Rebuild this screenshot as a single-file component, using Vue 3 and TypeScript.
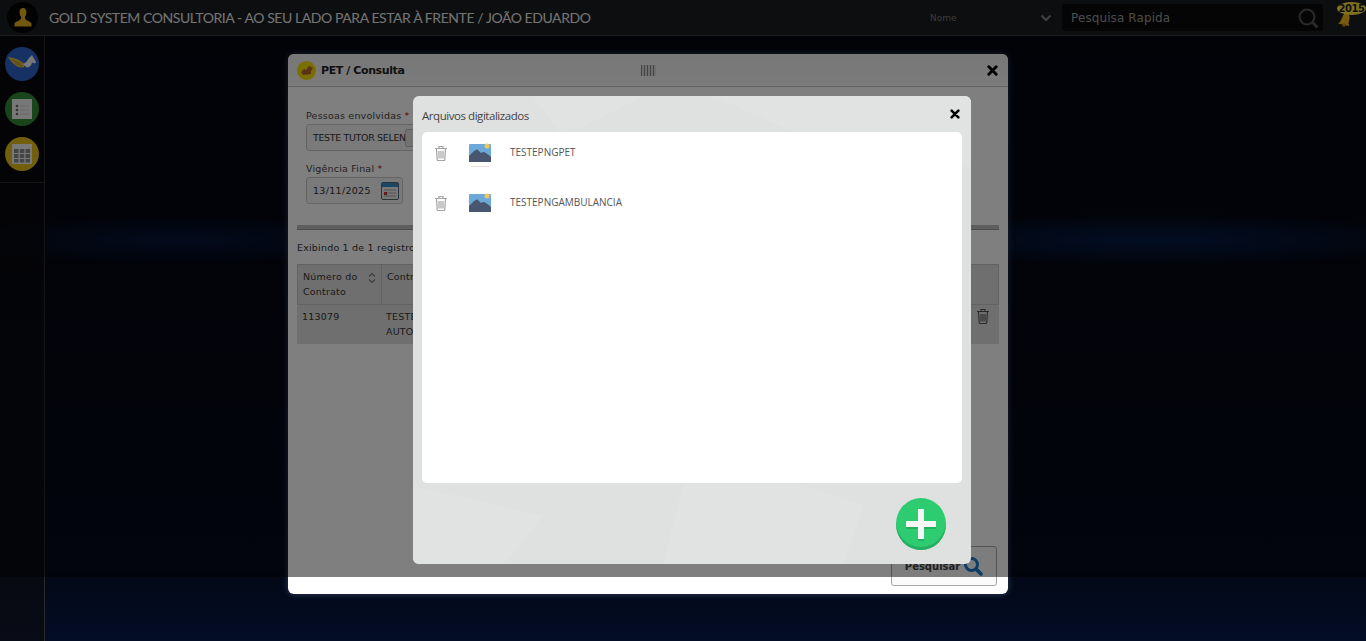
<script setup lang="ts">
type Arquivo = {
  id: number
  nome: string
}

const arquivos: Arquivo[] = [
  { id: 1, nome: 'TESTEPNGPET' },
  { id: 2, nome: 'TESTEPNGAMBULANCIA' },
]
</script>

<template>
  <div class="page">
    <header class="topbar">
      <div class="avatar">
        <svg width="18" height="19" viewBox="0 0 18 19">
          <path d="M9 0C6.800 0 5.400 1.800 5.500 4.200c.1 2 .8 3.600 1.500 4.500.3 1.500-.2 2.800-1.500 3.500C3.500 13.200 1 13.800.5 15.500V18.500h17v-3c-.5-1.700-3-2.300-5-3.300-1.300-.7-1.800-2-1.500-3.500.7-.9 1.400-2.500 1.500-4.500C12.600 1.800 11.200 0 9 0z" fill="#e2b01c" />
        </svg>
      </div>
      <h1 class="brand">GOLD SYSTEM CONSULTORIA - AO SEU LADO PARA ESTAR À FRENTE / JOÃO EDUARDO</h1>
      <div class="select-box">
        <span>Nome</span>
        <svg width="12" height="8" viewBox="0 0 12 8"><path d="M1.500 1.500 6 6l4.500-4.500" fill="none" stroke="#808080" stroke-width="2.200" /></svg>
      </div>
      <div class="search-box">
        <span>Pesquisa Rapida</span>
        <svg width="22" height="22" viewBox="0 0 22 22"><circle cx="10" cy="10" r="7.500" fill="none" stroke="#555" stroke-width="2" /><path d="m15.500 15.500 5 5" stroke="#555" stroke-width="2.600" /></svg>
      </div>
      <div class="bell">
        <svg class="bell-icon" width="17" height="15" viewBox="0 0 17 15">
          <path d="M9 1c-2 .5-3 2-3.500 4L3 10l-2 1.500L12 14c.3-1 0-1.500-.5-2.500l1-5C13 3.500 11.500 1 9 1z" fill="#f0b81c" />
          <circle cx="7" cy="13" r="1.800" fill="#c48a14" />
        </svg>
        <span class="bell-year">2015</span>
      </div>
    </header>

    <div class="workspace">
      <aside class="sidebar">
        <div class="side-icons">
          <div class="side-icon blue">
            <svg width="30" height="22" viewBox="0 0 30 22">
              <path d="M1 4c4 .5 8 1.500 11 3l6 4-1 3c-5 2-11-2-16-10z" fill="#e0b840" />
              <path d="M5 7l9 4M8 10l7 3" stroke="#a8862c" stroke-width=".8" />
              <path d="M16 11c3-1 4-3 6-6l3-3 1 2 3 5-1 1.500-3-1-1 3-3 2c-2 0-4-2-5-3.500z" fill="#f2f2f2" />
            </svg>
          </div>
          <div class="side-icon green">
            <svg width="20" height="20" viewBox="0 0 20 20">
              <rect width="20" height="20" fill="#f0f0f0" />
              <circle cx="5" cy="7" r="1.300" fill="#666" /><circle cx="5" cy="11" r="1.300" fill="#666" /><circle cx="5" cy="15" r="1.300" fill="#666" />
              <path d="M8 7h9M8 11h9M8 15h9" stroke="#ccc" />
            </svg>
          </div>
          <div class="side-icon yellow">
            <svg width="20" height="20" viewBox="0 0 20 20">
              <rect width="20" height="20" fill="#f0f0f0" />
              <path d="M2 5h4.500v4H2zM7.800 5h4.500v4H7.800zM13.500 5H18v4h-4.500zM2 10h4.500v4H2zM7.800 10h4.500v4H7.800zM13.500 10H18v4h-4.500zM2 15h4.500v3.500H2zM7.800 15h4.500v3.500H7.800zM13.500 15H18v3.500h-4.500z" fill="#888" />
            </svg>
          </div>
        </div>
      </aside>
    </div>

    <!-- janela de consulta -->
    <section class="pet-modal">
      <div class="pet-head">
        <span class="pet-logo">
          <svg width="14" height="11" viewBox="0 0 14 11"><path d="M1 7l3-3 2 1 3-4 4 2-2 3v3l-8 1z" fill="#b5652f" /></svg>
        </span>
        <h2 class="pet-title">PET / Consulta</h2>
        <span class="barcode"></span>
        <svg class="close-x" width="11" height="11" viewBox="0 0 12 12"><path d="M2 2l8 8M10 2l-8 8" stroke="#000" stroke-width="3.200" stroke-linecap="round" /></svg>
      </div>

      <div class="pet-body">
        <div class="field">
          <label>Pessoas envolvidas <em>*</em></label>
          <div class="input wide">
            <span class="input-text">TESTE TUTOR SELEN</span>
            <span class="input-btn"></span>
          </div>
        </div>
        <div class="field">
          <label>Vigência Final <em>*</em></label>
          <div class="input date">
            13/11/2025
            <svg width="18" height="18" viewBox="0 0 18 18">
              <rect x=".5" y=".5" width="17" height="17" rx="1.500" fill="#f0f0f0" stroke="#567" />
              <rect x="1" y="1" width="16" height="4" fill="#3a8cc8" />
              <path d="M3 8h12M3 11h12M3 14h12" stroke="#aaa" />
              <rect x="3" y="10" width="3" height="3" fill="#c33" />
            </svg>
          </div>
        </div>

        <div class="divider"></div>
        <p class="count">Exibindo 1 de 1 registros</p>

        <div class="table">
          <div class="t-head">
            <div class="th first">
              <span>Número do Contrato</span>
              <svg width="8" height="12" viewBox="0 0 8 12"><path d="M1 4.500 4 1.500l3 3M1 7.500l3 3 3-3" fill="none" stroke="#777" stroke-width="1.200" /></svg>
            </div>
            <div class="th second">Contrato</div>
            <div class="th fill"></div>
          </div>
          <div class="t-row">
            <div class="td first">113079</div>
            <div class="td second">TESTE<br />AUTO</div>
            <div class="td fill">
              <svg class="trash" width="14" height="16" viewBox="0 0 14 16">
                <path d="M1 3.500h12M5 3V1.500h4V3M2.500 4l.7 10.500c0 .6.500 1 1 1h5.600c.5 0 1-.4 1-1L11.500 4M5 6v7.500M7 6v7.500M9 6v7.500" fill="none" stroke="#555" stroke-width="1.100" />
              </svg>
            </div>
          </div>
        </div>

        <div class="pet-foot">
          <button class="btn-search" type="button">
            Pesquisar
            <svg width="20" height="20" viewBox="0 0 20 20"><circle cx="8.500" cy="8.500" r="6" fill="none" stroke="#1a78c8" stroke-width="3" /><path d="m13 13 5 5" stroke="#1a78c8" stroke-width="3.500" stroke-linecap="round" /></svg>
          </button>
        </div>
      </div>
    </section>

    <div class="dim"></div>

    <!-- janela de arquivos -->
    <section class="files-modal">
      <svg class="files-bg" width="558" height="468" viewBox="0 0 558 468">
        <path d="M120 0 230 0 150 40zM300 0 558 0 558 70 380 36z" fill="#e1e3e2" />
        <path d="M0 390 130 420 90 468 0 468zM280 350 450 410 430 468 250 468z" fill="#e1e3e2" />
      </svg>
      <div class="files-head">
        <h3>Arquivos digitalizados</h3>
        <svg width="10" height="10" viewBox="0 0 12 12"><path d="M2 2l8 8M10 2l-8 8" stroke="#000" stroke-width="3.200" stroke-linecap="round" /></svg>
      </div>
      <ul class="files-list">
        <li v-for="arq in arquivos" :key="arq.id" class="file-row">
          <svg class="file-trash" width="14" height="16" viewBox="0 0 14 16">
            <path d="M1 3.500h12M5 3V1.500h4V3M2.500 4l.7 10.500c0 .6.500 1 1 1h5.600c.5 0 1-.4 1-1L11.500 4M5 6v7.500M7 6v7.500M9 6v7.500" fill="none" stroke="#a4a4a4" stroke-width="1.200" />
          </svg>
          <svg class="thumb" width="22" height="18" viewBox="0 0 22 18">
            <path d="M1 0h20a1 1 0 0 1 1 1v17H0V1a1 1 0 0 1 1-1z" fill="#6aa9d8" />
            <circle cx="18" cy="2" r="2.500" fill="#f2c660" />
            <path d="M0 12 4 8c2-2 4-3 5-2l3 3 2-1c2 0 5 2 8 5v5H0z" fill="#48566f" />
            <path v-if="arq.id === 1" d="M2 22.500h18" stroke="#f3dfcf" />
          </svg>
          <span class="file-name">{{ arq.nome }}</span>
        </li>
      </ul>
      <div class="files-foot">
        <button class="btn-add" type="button" aria-label="Adicionar">
          <svg width="30" height="30" viewBox="0 0 30 30"><path d="M12 0h6v12h12v6H18v12h-6V18H0v-6h12z" fill="#f4f7f5" /></svg>
        </button>
      </div>
    </section>
  </div>
</template>

<style scoped>
.page {
  position: relative;
  height: 641px;
  overflow: hidden;
  font-family: "DejaVu Sans", sans-serif;
  background:
    radial-gradient(ellipse 300px 26px at 1150px 240px, #061c48 0%, rgba(6, 28, 72, 0) 100%),
    radial-gradient(ellipse 220px 24px at 180px 240px, #051538 0%, rgba(5, 21, 56, 0) 100%),
    linear-gradient(180deg, #03060f 0%, #040815 60%, #040a1c 89%, #020816 90%, #030d26 100%);
}

.topbar {
  height: 35px;
  border-bottom: 1px solid #3a3a3a;
  background: #1b1c1f;
  display: flex;
  align-items: center;
  padding-left: 7px;
}

.avatar {
  width: 31px;
  height: 31px;
  border-radius: 50%;
  background: #050505;
  display: flex;
  align-items: center;
  justify-content: center;
  flex: none;
}

.brand {
  margin: 0 0 0 11px;
  font-family: "Lato", sans-serif;
  font-size: 14px;
  font-weight: 400;
  letter-spacing: -.43px;
  color: #e8e8e8;
  white-space: nowrap;
  flex: none;
  width: 541px;
}

.select-box {
  margin-left: 340px;
  width: 127px;
  display: flex;
  align-items: center;
  justify-content: space-between;
  padding-right: 5px;
  font-size: 9px;
  color: #777;
  flex: none;
  box-sizing: border-box;
}

.search-box {
  margin-left: 5px;
  width: 261px;
  height: 27px;
  border-radius: 3px;
  background: #0a0a0a;
  display: flex;
  align-items: center;
  justify-content: space-between;
  padding: 0 4px 0 9px;
  box-sizing: border-box;
  font-size: 12px;
  letter-spacing: .1px;
  color: #999;
  flex: none;
}

.bell {
  position: relative;
  margin-left: 14px;
  width: 29px;
  height: 35px;
  flex: none;
}

.bell-icon {
  position: absolute;
  left: 0;
  top: 12px;
}

.bell-year {
  position: absolute;
  left: 0;
  top: 2px;
  width: 29px;
  height: 13px;
  border-radius: 50%;
  background: #ffe63a;
  color: #1c1c1c;
  font-size: 10px;
  font-weight: 700;
  line-height: 13px;
  text-align: center;
  letter-spacing: -.5px;
}

.workspace {
  height: 605px;
  display: flex;
}

.sidebar {
  width: 44px;
  border-right: 1px solid #2a2a2a;
  background: rgba(12, 12, 14, .6);
}

.side-icons {
  display: flex;
  flex-direction: column;
  align-items: center;
  gap: 11px;
  padding: 11px 0 11px;
  border-bottom: 1px solid #2c2c2c;
}

.side-icon {
  width: 34px;
  height: 34px;
  border-radius: 50%;
  display: flex;
  align-items: center;
  justify-content: center;
}

.side-icon.blue { background: #2c63c8; }
.side-icon.green { background: #338a34; }
.side-icon.yellow { background: #e4bc1a; }

.pet-modal {
  position: absolute;
  left: 288px;
  top: 54px;
  width: 720px;
  height: 540px;
  border-radius: 6px;
  background: #fff;
  box-shadow: 0 0 6px rgba(160, 190, 255, .3);
  display: flex;
  flex-direction: column;
  overflow: hidden;
}

.pet-head {
  height: 32px;
  flex: none;
  display: flex;
  align-items: center;
  padding: 0 9px;
  border-bottom: 1px solid #c6c6c6;
  background: linear-gradient(180deg, #efefef, #f8f8f8);
}

.pet-logo {
  width: 19px;
  height: 19px;
  border-radius: 50%;
  background: #f7dd00;
  display: flex;
  align-items: center;
  justify-content: center;
  flex: none;
}

.pet-title {
  margin: 0 0 0 5px;
  font-size: 11px;
  font-weight: 700;
  letter-spacing: -.4px;
  color: #222;
  width: 320px;
  flex: none;
}

.barcode {
  width: 15px;
  height: 11px;
  flex: none;
  background: repeating-linear-gradient(90deg, #888 0 1px, #ddd 1px 3px);
}

.close-x {
  margin-left: auto;
  margin-right: 1px;
}

.pet-body {
  flex: 1;
  display: flex;
  flex-direction: column;
  padding: 22px 9px 8px;
  min-height: 0;
}

.field {
  margin: 0 0 11px 9px;
  font-size: 9.500px;
  letter-spacing: .2px;
  color: #444;
}

.field label {
  display: block;
  line-height: 13px;
  margin-bottom: 2px;
}

.field em {
  color: #b00;
  font-style: normal;
}

.input {
  height: 27px;
  box-sizing: border-box;
  border: 1px solid #c8c8c8;
  border-radius: 3px;
  display: flex;
  align-items: center;
  padding-left: 6px;
  font-size: 9.500px;
  color: #333;
  background: #f4f4f4;
}

.input.wide {
  width: 340px;
}

.input-text {
  width: 92px;
  white-space: nowrap;
  letter-spacing: -.35px;
  flex: none;
}

.input-btn {
  width: 9px;
  height: 16px;
  border: 1px solid #bbb;
  border-radius: 2px;
  background: #e4e4e4;
  flex: none;
}

.input.date {
  width: 97px;
  justify-content: space-between;
  padding-right: 3px;
  letter-spacing: .3px;
}

.divider {
  height: 5px;
  margin-top: 10px;
  background: #bdbdbd;
  border-bottom: 1px solid #999;
  box-sizing: border-box;
}

.count {
  margin: 11px 0 10px;
  font-size: 9.500px;
  line-height: 13px;
  letter-spacing: .2px;
  color: #333;
}

.table {
  font-size: 9.500px;
  letter-spacing: .2px;
  color: #333;
  line-height: 15px;
  background: #dfdfdf;
}

.t-head,
.t-row {
  display: flex;
}

.t-head {
  height: 41px;
  border: 1px solid #c4c4c4;
  box-sizing: border-box;
}

.t-row {
  height: 39px;
}

.th {
  padding: 4px 5px;
  box-sizing: border-box;
}

.td {
  padding: 4px 5px;
  box-sizing: border-box;
}

.first {
  width: 84px;
  display: flex;
  gap: 6px;
  border-right: 1px solid #c4c4c4;
  flex: none;
}

.td.first {
  border-right: 0;
}

.first svg {
  flex: none;
  margin-top: 3px;
}

.second {
  width: 200px;
  flex: none;
}

.fill {
  flex: 1;
  display: flex;
  justify-content: flex-end;
}

.trash {
  margin-right: 4px;
  margin-top: -1px;
}

.pet-foot {
  margin-top: auto;
  display: flex;
  justify-content: flex-end;
  padding-right: 2px;
}

.btn-search {
  width: 106px;
  height: 40px;
  border: 1px solid #a8a8a8;
  border-radius: 3px;
  background: #fafafa;
  display: flex;
  align-items: center;
  justify-content: center;
  gap: 3px;
  font-family: "DejaVu Sans", sans-serif;
  font-size: 10px;
  font-weight: 700;
  color: #444;
}

.dim {
  position: absolute;
  left: 0;
  top: 0;
  width: 100%;
  height: 577px;
  background: rgba(0, 0, 0, .5);
}

.files-modal {
  position: absolute;
  left: 413px;
  top: 96px;
  width: 558px;
  height: 468px;
  box-sizing: border-box;
  padding: 0 9px;
  border-radius: 6px;
  background: #dfe1e0;
  display: flex;
  flex-direction: column;
  overflow: hidden;
}

.files-bg {
  position: absolute;
  left: 0;
  top: 0;
}

.files-head {
  position: relative;
  height: 36px;
  flex: none;
  display: flex;
  align-items: center;
  justify-content: space-between;
  padding-right: 2px;
}

.files-head h3 {
  margin: 3px 0 0;
  font-family: "Open Sans", sans-serif;
  font-size: 11.500px;
  font-weight: 400;
  letter-spacing: -.45px;
  color: #444;
}

.files-list {
  position: relative;
  flex: none;
  height: 351px;
  margin: 0;
  padding: 0;
  list-style: none;
  background: #fff;
  border-radius: 5px;
}

.file-row {
  height: 50px;
  display: flex;
  align-items: center;
  padding-left: 12px;
  box-sizing: border-box;
  position: relative;
  top: -4px;
}

.file-row .file-trash {
  flex: none;
}

.thumb {
  flex: none;
  margin-left: 21px;
  overflow: visible;
}

.file-name {
  margin-left: 19px;
  font-family: "Open Sans", sans-serif;
  font-size: 10px;
  color: #555;
  position: relative;
  top: -1px;
}

.files-foot {
  position: relative;
  flex: 1;
  display: flex;
  justify-content: flex-end;
  padding: 15px 16px 0 0;
}

.btn-add {
  width: 50px;
  height: 52px;
  padding: 0;
  border: 0;
  border-radius: 50%;
  background: #2ecc71;
  box-shadow: inset 0 -3px 0 #27ae60;
  display: flex;
  align-items: center;
  justify-content: center;
}

.btn-add svg {
  filter: drop-shadow(0 2px 0 #27ae60);
}
</style>
